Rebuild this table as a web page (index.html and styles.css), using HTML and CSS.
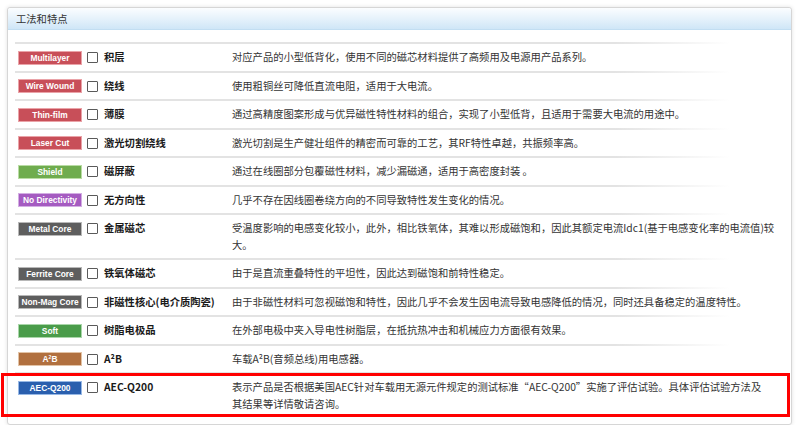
FILE: index.html
```html
<!DOCTYPE html>
<html lang="zh-CN">
<head>
<meta charset="utf-8">
<title>工法和特点</title>
<link rel="stylesheet" href="styles.css">
</head>
<body>
<div class="panel">
  <div class="panel-head">工法和特点</div>
  <div class="panel-body">
    <div class="row">
      <span class="badge red">Multilayer</span><span class="cb"></span>
      <span class="name">积层</span>
      <span class="desc">对应产品的小型低背化，使用不同的磁芯材料提供了高频用及电源用产品系列。</span>
    </div>
    <div class="row">
      <span class="badge red">Wire Wound</span><span class="cb"></span>
      <span class="name">绕线</span>
      <span class="desc">使用粗铜丝可降低直流电阻，适用于大电流。</span>
    </div>
    <div class="row">
      <span class="badge red">Thin-film</span><span class="cb"></span>
      <span class="name">薄膜</span>
      <span class="desc">通过高精度图案形成与优异磁性特性材料的组合，实现了小型低背，且适用于需要大电流的用途中。</span>
    </div>
    <div class="row">
      <span class="badge red">Laser Cut</span><span class="cb"></span>
      <span class="name">激光切割绕线</span>
      <span class="desc">激光切割是生产健壮组件的精密而可靠的工艺，其RF特性卓越，共振频率高。</span>
    </div>
    <div class="row">
      <span class="badge green">Shield</span><span class="cb"></span>
      <span class="name">磁屏蔽</span>
      <span class="desc">通过在线圈部分包覆磁性材料，减少漏磁通，适用于高密度封装 。</span>
    </div>
    <div class="row">
      <span class="badge purple">No Directivity</span><span class="cb"></span>
      <span class="name">无方向性</span>
      <span class="desc">几乎不存在因线圈卷绕方向的不同导致特性发生变化的情况。</span>
    </div>
    <div class="row">
      <span class="badge gray">Metal Core</span><span class="cb"></span>
      <span class="name">金属磁芯</span>
      <span class="desc">受温度影响的电感变化较小，此外，相比铁氧体，其难以形成磁饱和，因此其额定电流Idc1(基于电感变化率的电流值)较<br>大。</span>
    </div>
    <div class="row">
      <span class="badge gray">Ferrite Core</span><span class="cb"></span>
      <span class="name">铁氧体磁芯</span>
      <span class="desc">由于是直流重叠特性的平坦性，因此达到磁饱和前特性稳定。</span>
    </div>
    <div class="row">
      <span class="badge gray">Non-Mag Core</span><span class="cb"></span>
      <span class="name">非磁性核心(电介质陶瓷)</span>
      <span class="desc">由于非磁性材料可忽视磁饱和特性，因此几乎不会发生因电流导致电感降低的情况，同时还具备稳定的温度特性。</span>
    </div>
    <div class="row">
      <span class="badge soft">Soft</span><span class="cb"></span>
      <span class="name">树脂电极品</span>
      <span class="desc">在外部电极中夹入导电性树脂层，在抵抗热冲击和机械应力方面很有效果。</span>
    </div>
    <div class="row">
      <span class="badge brown">A<sup>2</sup>B</span><span class="cb"></span>
      <span class="name">A²B</span>
      <span class="desc">车载A²B(音频总线)用电感器。</span>
    </div>
    <div class="row row-marked">
      <span class="badge blue">AEC-Q200</span><span class="cb"></span>
      <span class="name">AEC-Q200</span>
      <span class="desc">表示产品是否根据美国AEC针对车载用无源元件规定的测试标准“AEC-Q200”实施了评估试验。具体评估试验方法及<br>其结果等详情敬请咨询。</span>
      <span class="highlight"></span>
    </div>
  </div>
</div>
</body>
</html>
```

FILE: styles.css
```css
html, body {
  margin: 0;
  padding: 0;
  background: #ffffff;
}

body {
  font-family: "Noto Sans CJK SC", "Liberation Sans", sans-serif;
  font-size: 10.3px;
  color: #333333;
}

.panel {
  margin: 7px 0 0 7px;
  width: 783px;
  height: 416px;
  border: 1px solid #d6d6d6;
  border-radius: 3px;
  box-shadow: 0 0 4px rgba(0, 0, 0, 0.12);
  background: #ffffff;
}

.panel-head {
  height: 21px;
  line-height: 21px;
  padding-left: 8px;
  border-bottom: 1px solid #c2def2;
  background: linear-gradient(to bottom, #fbfdff 0%, #e6f2fb 50%, #cfe6f7 100%);
  color: #333333;
  font-size: 10.3px;
  border-radius: 3px 3px 0 0;
}

.panel-body {
  padding: 12px 7px 0 7px;
}

.row {
  position: relative;
  display: grid;
  grid-template-columns: 64px 16px 134px 552px;
  align-items: start;
  padding: 7px 0 5px 3px;
  line-height: 16.5px;
  background-image: linear-gradient(to right, #e3e3e3 0%, #e3e3e3 78%, rgba(227, 227, 227, 0) 93%);
  background-size: 100% 2px;
  background-repeat: no-repeat;
  background-position: 0 0;
}

.badge {
  display: block;
  box-sizing: border-box;
  width: 64px;
  height: 14px;
  margin-top: 1.5px;
  border: 1px solid;
  font-family: "Liberation Sans", Arial, sans-serif;
  font-weight: bold;
  font-size: 8.4px;
  line-height: 12px;
  text-align: center;
  color: #ffffff;
  white-space: nowrap;
  overflow: hidden;
}

.badge sup {
  font-size: 5px;
  line-height: 0;
  vertical-align: 3px;
}

.red { background: #c84f59; border-color: #eaa3a8; }
.green { background: #6fac4e; border-color: #b9dca4; }
.purple { background: #a55bc1; border-color: #d3aee3; }
.gray { background: #5e5e5e; border-color: #b8b8b8; }
.soft { background: #4a9c4a; border-color: #a9d6a9; }
.brown { background: #b1703f; border-color: #e2c3a6; }
.blue { background: #2a5fae; border-color: #97b8e5; }

.cb {
  display: block;
  box-sizing: border-box;
  width: 11px;
  height: 11px;
  margin: 3px 0 0 5px;
  border: 1px solid #5a5a5a;
  background: #ffffff;
  border-radius: 1px;
}

.name {
  padding-left: 6px;
  font-weight: bold;
  color: #1a1a1a;
  white-space: nowrap;
}

.desc {
  color: #333333;
  white-space: nowrap;
}

.highlight {
  position: absolute;
  top: 1px;
  left: -14px;
  right: -6px;
  height: 44px;
  box-sizing: border-box;
  border: 3px solid #ff0000;
  pointer-events: none;
}
```
